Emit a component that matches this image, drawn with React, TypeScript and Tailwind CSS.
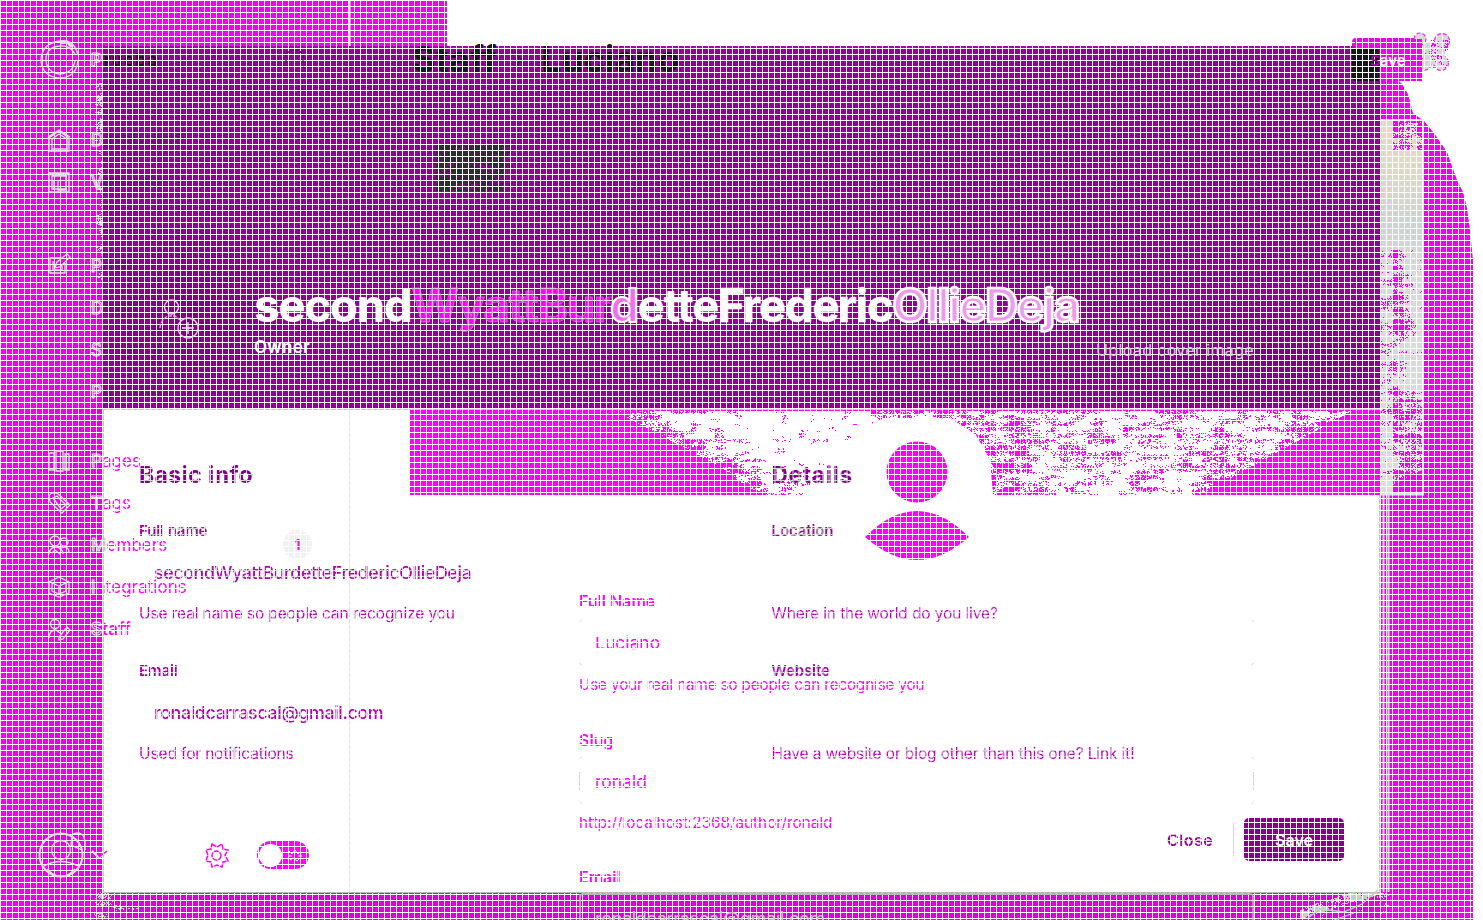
import React from "react";

function hash(x: number, y: number): number {
  let h = (x * 374761393 + y * 668265263) | 0;
  h = Math.imul(h ^ (h >>> 13), 1274126177);
  return ((h ^ (h >>> 16)) >>> 0) / 4294967296;
}

// Value noise stretched horizontally, used for the grain of the cover photo.
function smooth(x: number, y: number, sx: number, sy: number): number {
  const gx = Math.floor(x / sx);
  const gy = Math.floor(y / sy);
  const fx = x / sx - gx;
  const fy = y / sy - gy;
  const a = hash(gx, gy) * (1 - fx) + hash(gx + 1, gy) * fx;
  const b = hash(gx, gy + 1) * (1 - fx) + hash(gx + 1, gy + 1) * fx;
  return a * (1 - fy) + b * fy;
}

function speckle(x0: number, y0: number, w: number, h: number, density: (x: number, y: number) => number): string {
  let d = "";
  for (let y = y0; y < y0 + h; y++) {
    let run = 0;
    for (let x = x0; x <= x0 + w; x++) {
      const n = smooth(x, y, 9, 4) * 0.6 + hash(x, y) * 0.4;
      if (x < x0 + w && n < density(x, y)) {
        run++;
      } else if (run > 0) {
        d += `M${x - run} ${y}h${run}v1h-${run}z`;
        run = 0;
      }
    }
  }
  return d;
}

const coverGrain = speckle(618, 411, 762, 84, (x, y) => {
  const left = y < 465 ? 613 + (y - 410) * 1.9 : 717 + (y - 465) * 1.4;
  const right = 1352 - (y - 410) * 1.8;
  const edge = Math.min(x - left, right - x);
  if (edge < 0) return 0;
  const limit = x < 740 ? 0.7 : x < 870 ? 0.8 : x < 1040 ? 0.5 : 0.62;
  return Math.min(limit, 0.4 + edge * 0.006);
});

const sideGrain = speckle(1380, 250, 43, 235, (x, y) => {
  if (y < 330) return x < 1393 ? 0.3 : 0.52 - Math.abs(1397 - x) * 0.014 + (y - 250) * 0.001;
  if (y < 400) return 0.48 - Math.abs(x - 1394) * 0.012;
  return x < 1392 ? 0.3 : 0.5;
});

const blotGrain = speckle(436, 145, 74, 46, (x) => (x < 503 ? 0.68 : 0.38));
const sideTop = speckle(1393, 121, 29, 29, (x, y) => 0.6 - (y - 121) * 0.006);
const edgeGrain = speckle(93, 78, 10, 210, (x) => 0.18 + (x - 93) * 0.04);
const cornerGrain = speckle(85, 891, 60, 29, (x) => 0.44 - Math.abs(x - 103) * 0.009);
const bottomGrain = speckle(1300, 893, 90, 27, (x, y) => (x + y * 3.2 > 4205 && x + y * 3.2 < 4240 ? 0.6 : 0.18));
const cloverGrain = speckle(1424, 40, 24, 28, (x) => (x < 1430 ? 0.2 : 0.32));

const printed =
  "bg-[linear-gradient(#d6dad6_1px,transparent_1px),linear-gradient(90deg,#d6dad6_1px,transparent_1px)] bg-[length:6px_6px] bg-fixed bg-clip-text text-transparent whitespace-nowrap ";

function Backdrop() {
  return (
    <svg className="absolute inset-0" width="1483" height="920">
      <defs>
        <linearGradient id="peach" x1="0" y1="0" x2="0" y2="1">
          <stop offset="0" stopColor="#ecd6c2" />
          <stop offset=".13" stopColor="#dfd8c6" />
          <stop offset=".28" stopColor="#cad4d0" />
          <stop offset=".4" stopColor="#d6dad8" />
          <stop offset="1" stopColor="#dcdcdc" />
        </linearGradient>
        <linearGradient id="shadeLeft">
          <stop offset="0" stopColor="#f200f2" />
          <stop offset="1" stopColor="#e600e6" />
        </linearGradient>
      </defs>
      <rect width="447" height="47" fill="#f200f2" />
      <rect width="104" height="920" fill="url(#shadeLeft)" />
      <rect x="103" y="892" width="1280" height="28" fill="#dc00dc" />
      <path d="M1352 48V42Q1352 38 1356 38H1422V81H1399L1402 84L1408 94L1413 113L1424 121L1434 133L1447 152L1457 180L1463 192L1467 208L1470 230L1473 260V920H1380V48Z" fill="#f000f0" />
      <rect x="1380" y="119" width="43" height="376" fill="url(#peach)" />
      <path d={sideGrain} fill="#f000f0" />
      <path d={sideTop} fill="#f000f0" />
      <path d="M1393 485L1400 481L1412 475L1422 470V493H1393Z" fill="#f000f0" />
      <path d="M1383.500 495V892M1388.500 495V892" stroke="#d8d8d8" strokeWidth="2" />
      <path d="M1380 494.500h43V119" stroke="#e2e2e2" strokeWidth="2" fill="none" />
      <path d={edgeGrain} fill="#d8d8d8" />
      <path d={cornerGrain} fill="#c8c8c8" />
      <path d={bottomGrain} fill="#c8ccc8" />
    </svg>
  );
}

function DialogSurface() {
  return (
    <div className="absolute left-[103px] top-[46px] flex h-[847px] w-[1277px] flex-col">
      <div className="h-[363px] border-t-2 border-[#a900a9] bg-[#900094] bg-[radial-gradient(circle_at_88px_266px,#7d0080_0,transparent_95px),radial-gradient(ellipse_at_1160px_310px,#7e0082_0,transparent_220px)]" />
      <div className="flex h-[86px] border-l border-t border-[#c4c4c4] bg-white">
        <div className="w-[306px]" />
        <div className="flex-1 bg-[#ff00ff]" />
      </div>
      <div className="flex-1 border-b border-l border-r border-[#c4c8c4] bg-white" />
    </div>
  );
}

function PhotoAndAvatar() {
  return (
    <svg className="absolute inset-0" width="1483" height="920">
      <path d={coverGrain} fill="#fff" />
      <path d="M812 495L822 478L846 445L862 428L885 418H950L976 435L990 460L993 495Z" fill="#fff" />
      <circle cx="917" cy="472" r="30.500" fill="#f0f" />
      <path d="M865 537Q917 485 969 537Q917 583 865 537Z" fill="#f0f" />
      <path d="M349.500 410V892" stroke="#e3e3e3" />
      <path d={blotGrain} fill="#2b2d2f" />
      <path d="M1352 48H1375Q1379 48 1379 52V81H1356Q1352 81 1352 77Z" fill="#15171a" />
    </svg>
  );
}

function NavText({ text, dark, bold }: { text: string; dark?: boolean; bold?: boolean }) {
  return (
    <div className={"flex h-full items-center text-[17px] tracking-[0.05px] " + (bold ? "font-semibold" : "font-normal")}>
      <span className="text-[#e800e8] [-webkit-text-stroke:1px_#dedede]">{text[0]}</span>
      <span className={dark ? "text-[#5a1a66]" : "text-[#ff00ff]"}>{text.slice(1)}</span>
    </div>
  );
}

function Sidebar() {
  return (
    <aside className="flex w-[350px] shrink-0 flex-col pl-[91px] pt-[40px]">
      <div className="mb-[38px] flex h-[42px] items-center text-[17px] font-bold tracking-[1.4px]">
        <span className="text-[#e800e8] [-webkit-text-stroke:1px_#dedede]">P</span>
        <span className="text-[#171318]">rueba</span>
      </div>
      <div className="h-[42px]"><NavText text="Dashboard" dark /></div>
      <div className="h-[42px]"><NavText text="View site" dark /></div>
      <div className="h-[42px]" />
      <div className="h-[42px]"><NavText text="Posts" dark /></div>
      <div className="h-[42px]"><NavText text="Drafts" dark /></div>
      <div className="h-[42px]"><NavText text="Scheduled" dark /></div>
      <div className="mb-[27px] h-[42px]"><NavText text="Published" dark /></div>
      <div className="h-[42px]"><NavText text="Pages" /></div>
      <div className="h-[42px]"><NavText text="Tags" /></div>
      <div className="flex h-[42px] justify-between pr-[38px]">
        <NavText text="Members" />
        <span className="mt-[5px] flex size-[29px] items-center justify-center rounded-full bg-[#f0f1f3] text-[14px] font-bold text-[#ff00ff]">1</span>
      </div>
      <div className="h-[42px]"><NavText text="Integrations" /></div>
      <div className="h-[42px]"><NavText text="Staff" bold /></div>
    </aside>
  );
}

function InputRow({ value, sides }: { value: string; sides?: boolean }) {
  return (
    <div className="mt-[7px] flex h-[43px] w-[675px] items-center justify-between">
      <span className={"h-[18px] border-l " + (sides ? "border-[#d5d5d5]" : "border-transparent")} />
      <span className="flex-1 pl-[15px] pt-[3px] text-[17.500px]">{value}</span>
      <span className={"h-[18px] border-l " + (sides ? "border-[#d5d5d5]" : "border-transparent")} />
    </div>
  );
}

function StaffPage() {
  return (
    <div className="absolute inset-0 flex overflow-hidden">
      <Sidebar />
      <main className="flex flex-1 flex-col">
        <header className="flex h-[119px] items-center justify-between pl-[62px] pr-[60px]">
          <h1 className="flex items-center text-[35.500px] font-bold tracking-[0.2px] text-[#15171a]">
            <span className="w-[101px]">Staff</span>
            <svg width="10" height="18" className="mr-[18px]" fill="none" stroke="#35203a" strokeWidth="1.500"><path d="M2 1L8 9L2 17" /></svg>
            <span>Luciano</span>
          </h1>
        </header>
        <form className="mt-[470px] flex shrink-0 flex-col pl-[229px] text-[16px] text-[#ff00ff]">
          <label className="h-6 font-semibold leading-6">Full Name</label>
          <InputRow value="Luciano" />
          <p className="mb-[31px] mt-[10px] h-6 text-[15.200px] leading-6 tracking-[-0.11px]">Use your real name so people can recognise you</p>
          <label className="h-6 font-semibold leading-6">Slug</label>
          <InputRow value="ronald" sides />
          <p className="mb-[30px] mt-[9px] h-6 text-[15.300px] leading-6">http://localhost:2368/author/ronald</p>
          <label className="h-6 font-semibold leading-6">Email</label>
        </form>
      </main>
    </div>
  );
}

function Grid() {
  return (
    <div className="absolute inset-0 bg-[linear-gradient(#fff_1px,transparent_1px),linear-gradient(90deg,#fff_1px,transparent_1px)] bg-[length:6px_6px]" />
  );
}

function LineArt() {
  return (
    <svg className="absolute inset-0" width="1483" height="920" fill="none" stroke="#dfe3df" strokeWidth="1.3">
      <path d="M349.500 0V46" stroke="#eee" strokeWidth="2" />
      <path d="M78 55Q74 39 60 41Q42 43 41 60Q42 77 60 78Q77 77 78 60M75 54Q70 45 60 46Q46 47 46 60Q47 73 60 74Q74 73 75 60M59 42H68" />
      <path d="M60 43L67 42L72 47" strokeWidth="3" />
      <path d="M49 151V138L59 131L69 138V151ZM52 148V139L59 134L67 139V148M51 149H68M48 137L59 130L70 137" />
      <path d="M49 173H69V192H49ZM52 176H66V189H52ZM50 174.500H68M54 180V190M58 180V190H66" />
      <path d="M60 258H50V273H65V263M53 261V270H62V265M55 268L57 262L67 254L70 257L60 267Z" />
      <path d="M49 453H54V470H49ZM56 451H63V471H56ZM65 454H69V470H65Z" />
      <path d="M49 496L51 493L57 493L70 505L62 513L50 502ZM53 498L57 496L66 505L61 509Z" />
      <circle cx="55" cy="541" r="5" /><circle cx="64" cy="542" r="4" />
      <path d="M49 554Q50 547 56 547Q62 547 63 554M59 549Q69 544 69 553M52 553L55 550L60 554" />
      <path d="M59 577L69 582V593L59 597L49 593V582ZM52 583L59 586L66 583V591L59 594L52 591ZM59 586V594" />
      <circle cx="55" cy="624" r="4.500" />
      <path d="M49 638Q49 630 56 630L60 633M59 637L67 627L70 630L63 639L59 640Z" />
      <circle cx="61" cy="855" r="21.500" strokeWidth="2" />
      <circle cx="61" cy="850" r="9.500" />
      <path d="M44 866Q61 857 78 866M47 869Q61 884 75 869M71 835Q83 829 85 841V850M72 837L71 845L82 850" />
      <path d="M92 851L99 858L107 851" strokeWidth="2" />
      <path d="M99 857L107 851" stroke="#e600e6" />
      <circle cx="171.500" cy="307" r="7" stroke="#f2d5f2" />
      <path d="M160 328Q161 319 168 316H175L180 320" stroke="#e8a5e8" strokeDasharray="4 1" />
      <circle cx="188" cy="328" r="10" stroke="#f1ccf1" />
      <path d="M188 322V334M182 328H194" stroke="#f5e2f5" />
      <path d="M286 63V54L291 50H299L303 55V64M303 67L306 69" stroke="#4a1454" strokeDasharray="3 2" />
      <path d="M580 913V897Q580 894 584 894H1250Q1253 894 1253 897V920M580 920V905" stroke="#cacaca" />
      <path d="M103 409.500H1380M103.500 409V892" stroke="#c3c7c3" strokeWidth="1" strokeDasharray="5 1" />
      <path d="M103 892.500H1380M579 894.500H1253" stroke="#b9bdb9" strokeWidth="1" />
      <path d="M1308 918L1320 909L1344 912L1362 904L1378 890M1334 920L1354 913" stroke="#c8ccc8" />
      <path d="M579 622l3-3M579 663l3 2M579 759l3-2M579 801l3 3M1251 620l3 2M1251 665l3-2M1251 757l3 2M1251 804l3-3" stroke="#e2e2e2" strokeWidth="1" />
      <g>
        <g fill="#d9d9d9" stroke="#ef21ef" strokeWidth="1.200" strokeDasharray="4 2">
          <circle cx="1420" cy="39" r="6" />
          <circle cx="1442" cy="41" r="7.500" />
          <circle cx="1441" cy="63" r="7.500" />
          <circle cx="1425" cy="64" r="6" />
        </g>
        <rect x="1423" y="42" width="22" height="22" fill="#d6d6d6" stroke="none" />
        <path d={cloverGrain} fill="#f000f0" stroke="none" />
        <path d="M1424.500 40V70M1430.500 40V66M1436.500 34V71M1442.500 34V71M1423 42.500H1449M1423 48.500H1446M1423 54.500H1446M1423 60.500H1449M1423 66.500H1448" stroke="#f4f4f4" strokeWidth="1" />
        <path d="M1355 39H1422V81H1380V48H1355Z" fill="#f000f0" stroke="none" />
        <path d="M1356 42.500H1422M1380 48.500H1422M1380 54.500H1422M1380 60.500H1422M1380 66.500H1422M1380 72.500H1422M1380 78.500H1422M1356.500 39V48M1362.500 39V48M1368.500 39V48M1374.500 39V48M1386.500 39V81M1392.500 39V81M1398.500 39V81M1404.500 39V81M1410.500 39V81M1416.500 39V81M1380.500 39V81" stroke="#fff" strokeWidth="1" />
      </g>
      <g stroke="#f0f" strokeWidth="1.500" strokeDasharray="5 1">
        <circle cx="216.500" cy="855.500" r="4.500" />
        <path d="M212 844L217 847L222 844L223 849L228 850L225 855L228 861L223 862L222 867L217 865L212 867L211 862L206 861L208 855L206 850L211 849Z" />
      </g>
    </svg>
  );
}

function Toggle() {
  return (
    <div className="absolute left-[257px] top-[841px] flex h-[28px] w-[52px] items-center justify-between rounded-full bg-[#ff00ff] bg-[linear-gradient(#fff_1px,transparent_1px),linear-gradient(90deg,#fff_1px,transparent_1px)] bg-[length:6px_6px] bg-fixed px-[2px]">
      <span className="size-[23px] rounded-full bg-white" />
      <svg width="16" height="14" viewBox="0 0 16 14" className="mr-[4px]" stroke="#fff" strokeWidth="1" fill="none"><path d="M2 3L5 6L8 2L11 6L14 3M1 8H5M11 8H15M3 12L6 10L10 13L13 10" /></svg>
    </div>
  );
}

function Field({ label, value, help }: { label: string; value: string; help: string }) {
  return (
    <div className="h-[140px]">
      <div className={printed + "w-fit bg-[#a000a0] text-[15px] font-semibold leading-6 tracking-[-0.1px]"}>{label}</div>
      <div className="mt-[4px] flex h-[52px] items-center pl-[15px]">
        <span className={printed + "bg-[#b000b0] text-[17.800px] font-medium leading-[26px] tracking-[-0.36px]"}>{value}</span>
      </div>
      <div className={printed + "mt-[3px] w-fit bg-[#c000c0] text-[15.500px] leading-6 tracking-[-0.12px]"}>{help}</div>
    </div>
  );
}

function ProfileDialog() {
  return (
    <section className="absolute left-[103px] top-[46px] flex h-[847px] w-[1277px] flex-col">
      <div className="flex h-[363px] items-end justify-between pb-[46px] pl-[151px] pr-[126px]">
        <div className="mb-[3px] w-[826px]">
          <h2 className="whitespace-nowrap text-[46px] font-bold leading-[58px] tracking-[-1.480px] text-white">
            second
            <span className="bg-[linear-gradient(#f3e3f3_1px,transparent_1px),linear-gradient(90deg,#f3e3f3_1px,transparent_1px)] bg-[length:6px_6px] bg-fixed bg-[#ff00ff] bg-clip-text text-transparent [-webkit-text-stroke:0.5px_#b4a0b4]">WyattBur</span>
            <span className="text-[#ee70ee] [-webkit-text-stroke:2px_white]">d</span>
            ette
            <span className="[-webkit-text-stroke:0.3px_white]">Frederic</span>
            <span className="text-[#ec9cec] [-webkit-text-stroke:2.500px_white]">OllieDeja</span>
          </h2>
          <p className="text-[17px] font-semibold leading-[26px] tracking-[0.3px] text-white">Owner</p>
        </div>
        <span className="shrink-0 whitespace-nowrap text-[16px] leading-[26px] tracking-[0.35px] text-[#d7ced7]">Upload cover image</span>
      </div>
      <div className="grid flex-1 grid-cols-2 pl-[36px] pt-[51px]">
        <div className="w-[633px]">
          <h3 className={printed + "mb-[29px] w-fit bg-[#82008a] text-[23px] font-bold leading-[30px] tracking-[0.4px]"}>Basic info</h3>
          <Field label="Full name" value="secondWyattBurdetteFredericOllieDeja" help="Use real name so people can recognize you" />
          <Field label="Email" value="ronaldcarrascal@gmail.com" help="Used for notifications" />
        </div>
        <div className="pl-[12px]">
          <h3 className={printed + "mb-[29px] w-fit bg-[#82008a] text-[23px] font-bold leading-[30px] tracking-[0.5px]"}>Details</h3>
          <Field label="Location" value="" help="Where in the world do you live?" />
          <Field label="Website" value="" help="Have a website or blog other than this one? Link it!" />
        </div>
      </div>
      <footer className="flex h-[75px] shrink-0 items-start justify-end pr-[36px]">
        <span className={printed + "bg-[#970097] text-[16px] font-semibold leading-[44px] tracking-[0.4px]"}>Close</span>
        <span className="ml-[20px] mr-[10px] mt-[5px] h-[33px] border-l border-[#d8d8d8]" />
        <button className="h-[43px] w-[100px] rounded-[5px] bg-[#880089] bg-[linear-gradient(#fff_1px,transparent_1px),linear-gradient(90deg,#fff_1px,transparent_1px)] bg-[length:6px_6px] bg-fixed text-[16px] font-semibold text-white">Save</button>
      </footer>
    </section>
  );
}

export default function App() {
  return (
    <div className="relative h-[920px] w-[1483px] overflow-hidden bg-white font-['Inter',sans-serif]">
      <Backdrop />
      <DialogSurface />
      <PhotoAndAvatar />
      <StaffPage />
      <Grid />
      <LineArt />
      <ProfileDialog />
      <Toggle />
      <span className="absolute left-[1370px] top-[49px] text-[15px] font-semibold leading-6 text-white"><span className="text-[#a000a0]">S</span>ave</span>
      <span className="absolute left-[595px] top-[907px] text-[18px] leading-6 tracking-[-0.3px] text-[#c6c6c6]">ronaldcarrascal@gmail.com</span>
    </div>
  );
}
